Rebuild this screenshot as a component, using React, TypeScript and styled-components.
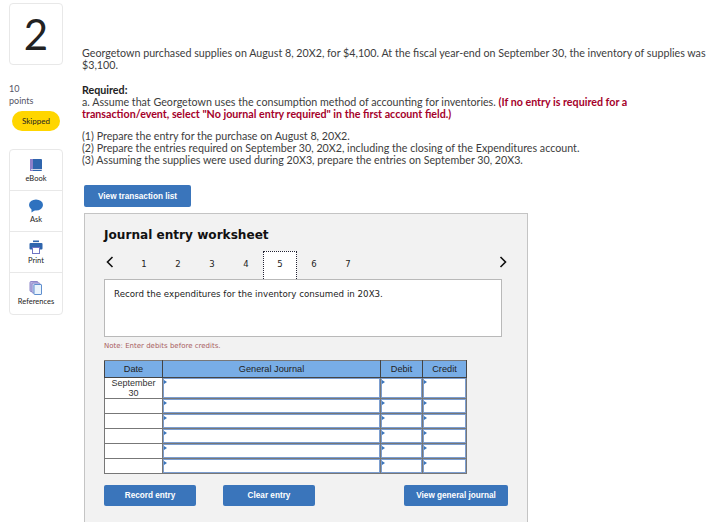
import React from 'react';
import styled, { createGlobalStyle } from 'styled-components';

const GlobalStyle = createGlobalStyle`
  html, body {
    margin: 0;
    padding: 0;
    background: #fff;
    overflow: hidden;
  }
`;

const Page = styled.div`
  display: flex;
  width: 709px;
  height: 522px;
  overflow: hidden;
  font-family: 'Lato', sans-serif;
  color: #333;
`;

const Sidebar = styled.aside`
  width: 72px;
  flex-shrink: 0;
  padding: 3px 0 0 9px;
  box-sizing: border-box;
`;

const NumberBox = styled.div`
  width: 54px;
  height: 62px;
  box-sizing: border-box;
  border: 1px solid #e8e8e8;
  border-radius: 4px;
  display: flex;
  align-items: center;
  justify-content: center;
  font-family: 'Lato', sans-serif;
  font-size: 42px;
  color: #222;
`;

const Points = styled.div`
  margin-top: 18px;
  font-size: 9px;
  line-height: 12px;
  color: #556;
`;

const SkippedPill = styled.div`
  margin: 4px 0 0 3px;
  width: 48px;
  height: 20px;
  border-radius: 10px;
  background: #ffd600;
  font-size: 8px;
  line-height: 20px;
  text-align: center;
  color: #222;
`;

const ToolBox = styled.div`
  margin-top: 18px;
  width: 54px;
  box-sizing: border-box;
  border: 1px solid #e8e8e8;
  border-radius: 4px;
`;

const ToolItem = styled.div`
  height: 41px;
  box-sizing: border-box;
  border-bottom: 1px solid #e8e8e8;
  display: flex;
  flex-direction: column;
  align-items: center;
  padding-top: 8px;
  gap: 2px;
  font-size: 7.5px;
  line-height: 9px;
  color: #222;
  &:last-child { border-bottom: 0; }
  svg { display: block; }
`;

const Main = styled.main`
  flex: 1;
  min-width: 0;
  padding: 47px 0 0 10px;
`;

const Para = styled.p<{ $gap?: number }>`
  margin: ${p => p.$gap ?? 0}px 0 0;
  font-size: 10.7px;
  line-height: 12px;
  color: #3d3d3d;
  width: 627px;
`;

const Heading = styled.div`
  font-weight: 700;
  color: #222;
`;

const Alert = styled.strong`
  color: #a5002a;
  font-weight: 700;
`;

const BlueButton = styled.button<{ $w: number; $h?: number }>`
  width: ${p => p.$w}px;
  height: ${p => p.$h ?? 22}px;
  padding: 0;
  border: 0;
  border-radius: 2px;
  background: #3a75bb;
  color: #fff;
  font-family: 'Liberation Sans', Arial, sans-serif;
  font-size: 8.2px;
  font-weight: 700;
`;

const TransactionRow = styled.div`
  margin: 19px 0 6px 2px;
  display: flex;
`;

const Panel = styled.section`
  margin-left: 2px;
  width: 444px;
  height: 320px;
  box-sizing: border-box;
  background: #f2f2f2;
  border: 1px solid #c4c4c4;
  padding: 13px 19px 0;
`;

const Title = styled.h2`
  margin: 0;
  font-family: 'DejaVu Sans', Verdana, sans-serif;
  font-size: 12.1px;
  line-height: 17px;
  font-weight: 700;
  color: #111;
`;

const TabRow = styled.div`
  margin-top: 7px;
  width: 398px;
  height: 28px;
  display: flex;
  align-items: center;
`;

const Chevron = styled.svg`
  flex-shrink: 0;
  margin: 0 0 6px 2px;
`;

const Tabs = styled.div`
  display: flex;
  margin-left: 13px;
  align-self: stretch;
`;

const Tab = styled.div<{ $active?: boolean }>`
  width: 34px;
  box-sizing: border-box;
  display: flex;
  align-items: center;
  justify-content: center;
  padding-bottom: 4px;
  font-family: 'DejaVu Sans', Verdana, sans-serif;
  font-size: 8.5px;
  color: #222;
  background: ${p => (p.$active ? '#fff' : 'transparent')};
  border: ${p => (p.$active ? '1px dotted #223' : '1px solid transparent')};
  border-bottom: 0;
`;

const NextChevron = styled(Chevron)`
  margin-left: auto;
  margin-right: -5px;
`;

const Instruction = styled.div`
  width: 398px;
  height: 58px;
  box-sizing: border-box;
  border: 1px solid #b9b9b9;
  background: #fff;
  padding: 8px 9px;
  font-family: 'DejaVu Sans', Verdana, sans-serif;
  font-size: 8.7px;
  line-height: 12px;
  color: #222;
`;

const Note = styled.div`
  margin-top: 4px;
  font-family: 'DejaVu Sans', Verdana, sans-serif;
  font-size: 7px;
  line-height: 10px;
  color: #a8605f;
`;

const JournalTable = styled.table`
  margin-top: 9px;
  width: 362px;
  table-layout: fixed;
  border-collapse: collapse;
  border: 1px solid #777;
`;

const HeadCell = styled.th<{ $w: number }>`
  box-sizing: border-box;
  width: ${p => p.$w}px;
  height: 17px;
  padding: 0;
  background: #78ade6;
  border: 1px solid #444;
  border-top-color: #777;
  font-family: 'Liberation Sans', Arial, sans-serif;
  font-size: 9.2px;
  font-weight: 400;
  color: #222;
`;

const DateCell = styled.td<{ $first?: boolean }>`
  height: ${p => (p.$first ? 20 : 14)}px;
  padding: 0 4px;
  background: #fff;
  border: 1px solid #777;
  text-align: center;
  font-family: 'Liberation Sans', Arial, sans-serif;
  font-size: 9px;
  line-height: 10px;
  color: #333;
  vertical-align: top;
`;

const InputCell = styled.td`
  position: relative;
  padding: 0;
  background: #fff;
  border: 1px solid #777;
  box-shadow: inset 0 0 0 1px #7c9ed0;
  &::before {
    content: '';
    position: absolute;
    left: 1px;
    top: 2px;
    border-left: 3px solid #3a75bb;
    border-top: 2px solid transparent;
    border-bottom: 2px solid transparent;
  }
`;

const ButtonRow = styled.div`
  margin-top: 11px;
  display: flex;
`;

const ClearSlot = styled.div`
  margin-left: 27px;
  margin-right: auto;
  display: flex;
`;

const tools = [
  {
    label: 'eBook',
    icon: (
      <svg width="14" height="14" viewBox="0 0 14 14">
        <rect x="1" y="1" width="12" height="12" rx="1" fill="#2f65ad" />
        <rect x="1" y="1" width="3" height="12" fill="#8d7fc9" />
        <rect x="2" y="11" width="11" height="1" fill="#cfd6ea" />
      </svg>
    ),
  },
  {
    label: 'Ask',
    icon: (
      <svg width="14" height="14" viewBox="0 0 14 14">
        <ellipse cx="7" cy="6" rx="7" ry="5.5" fill="#2f72bf" />
        <path d="M2.5 9 L2.5 13.5 L7 10.5 Z" fill="#2f72bf" />
      </svg>
    ),
  },
  {
    label: 'Print',
    icon: (
      <svg width="14" height="14" viewBox="0 0 14 14">
        <rect x="4" y="0.5" width="6" height="1.6" fill="#2f65ad" />
        <rect x="0.5" y="3" width="13" height="6.5" rx="1" fill="#2f65ad" />
        <rect x="3.5" y="7.5" width="7" height="6" fill="#fff" stroke="#6f74c4" />
      </svg>
    ),
  },
  {
    label: 'References',
    icon: (
      <svg width="14" height="14" viewBox="0 0 14 14">
        <rect x="1" y="0.5" width="8" height="10" rx="1" fill="#b9b4e2" stroke="#8d86c9" />
        <rect x="3" y="2" width="8" height="10" rx="1" fill="#cdd5f0" stroke="#8d86c9" />
        <rect x="5" y="3.5" width="7.5" height="10" rx="0.5" fill="#eaf4fc" stroke="#5f8fcf" />
      </svg>
    ),
  },
];

const rows = ['September 30', '', '', '', '', ''];

export default function App() {
  return (
    <Page>
      <GlobalStyle />
      <Sidebar>
        <NumberBox>2</NumberBox>
        <Points>
          10
          <br />
          points
        </Points>
        <SkippedPill>Skipped</SkippedPill>
        <ToolBox>
          {tools.map(tool => (
            <ToolItem key={tool.label}>
              {tool.icon}
              {tool.label}
            </ToolItem>
          ))}
        </ToolBox>
      </Sidebar>
      <Main>
        <Para>
          Georgetown purchased supplies on August 8, 20X2, for $4,100. At the fiscal year-end on September 30, the inventory of supplies was $3,100.
        </Para>
        <Para $gap={13}>
          <Heading>Required:</Heading>
          a. Assume that Georgetown uses the consumption method of accounting for inventories.{' '}
          <Alert>(If no entry is required for a transaction/event, select "No journal entry required" in the first account field.)</Alert>
        </Para>
        <Para $gap={10}>
          (1) Prepare the entry for the purchase on August 8, 20X2.
          <br />
          (2) Prepare the entries required on September 30, 20X2, including the closing of the Expenditures account.
          <br />
          (3) Assuming the supplies were used during 20X3, prepare the entries on September 30, 20X3.
        </Para>
        <TransactionRow>
          <BlueButton $w={107}>View transaction list</BlueButton>
        </TransactionRow>
        <Panel>
          <Title>Journal entry worksheet</Title>
          <TabRow>
            <Chevron width="8" height="12" viewBox="0 0 8 12">
              <path d="M6.5 1 L1.5 6 L6.5 11" fill="none" stroke="#111" strokeWidth="1.6" />
            </Chevron>
            <Tabs>
              {[1, 2, 3, 4, 5, 6, 7].map(n => (
                <Tab key={n} $active={n === 5}>{n}</Tab>
              ))}
            </Tabs>
            <NextChevron width="8" height="12" viewBox="0 0 8 12">
              <path d="M1.5 1 L6.5 6 L1.5 11" fill="none" stroke="#111" strokeWidth="1.6" />
            </NextChevron>
          </TabRow>
          <Instruction>Record the expenditures for the inventory consumed in 20X3.</Instruction>
          <Note>Note: Enter debits before credits.</Note>
          <JournalTable>
            <thead>
              <tr>
                <HeadCell $w={58}>Date</HeadCell>
                <HeadCell $w={218}>General Journal</HeadCell>
                <HeadCell $w={42}>Debit</HeadCell>
                <HeadCell $w={44}>Credit</HeadCell>
              </tr>
            </thead>
            <tbody>
              {rows.map((date, i) => (
                <tr key={i}>
                  <DateCell $first={i === 0}>{date}</DateCell>
                  <InputCell />
                  <InputCell />
                  <InputCell />
                </tr>
              ))}
            </tbody>
          </JournalTable>
          <ButtonRow>
            <BlueButton $w={92} $h={21}>Record entry</BlueButton>
            <ClearSlot>
              <BlueButton $w={92} $h={21}>Clear entry</BlueButton>
            </ClearSlot>
            <BlueButton $w={104} $h={21}>View general journal</BlueButton>
          </ButtonRow>
        </Panel>
      </Main>
    </Page>
  );
}
